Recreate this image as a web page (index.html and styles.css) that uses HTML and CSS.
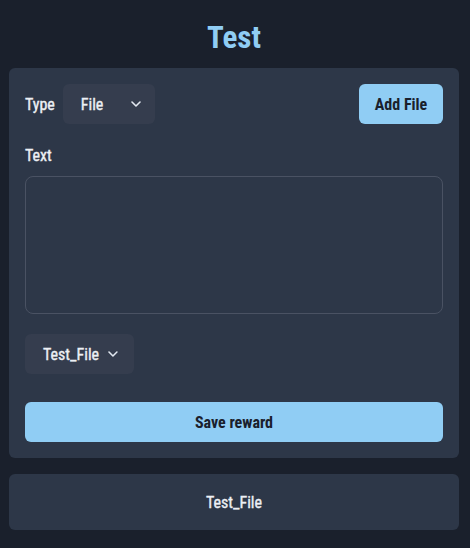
FILE: index.html
```html
<!DOCTYPE html>
<html>
<head>
<meta charset="utf-8">
<link rel="stylesheet" href="styles.css">
</head>
<body>
<main class="page">
  <h1 class="title">Test</h1>
  <section class="card">
    <div class="row-top">
      <div class="type-group">
        <span class="label label-type">Type</span>
        <div class="select select-type">
          <span>File</span>
          <svg class="chev" width="10" height="6" viewBox="0 0 10 6"><path d="M1 1l4 4 4-4" fill="none" stroke="currentColor" stroke-width="1.6" stroke-linecap="round" stroke-linejoin="round"/></svg>
        </div>
      </div>
      <button class="btn btn-add">Add File</button>
    </div>
    <div class="field">
      <span class="label">Text</span>
      <textarea class="textarea"></textarea>
    </div>
    <div class="select select-file">
      <span>Test_File</span>
      <svg class="chev" width="10" height="6" viewBox="0 0 10 6"><path d="M1 1l4 4 4-4" fill="none" stroke="currentColor" stroke-width="1.6" stroke-linecap="round" stroke-linejoin="round"/></svg>
    </div>
    <button class="btn btn-save">Save reward</button>
  </section>
  <section class="card item">Test_File</section>
</main>
</body>
</html>
```
FILE: styles.css
```css
* { box-sizing: border-box; }
html, body { margin: 0; padding: 0; }
body {
  background: #1a202c;
  color: #e8ecf2;
  font-family: Roboto, "Liberation Sans", sans-serif;
  font-stretch: condensed;
  width: 470px;
  height: 548px;
  overflow: hidden;
}
.page {
  width: 468px;
  padding: 0 9px;
  display: flex;
  flex-direction: column;
}
.title {
  margin: 0;
  height: 68px;
  display: flex;
  align-items: center;
  justify-content: center;
  font-size: 31px;
  font-weight: 700;
  color: #90cdf4;
  padding-top: 6px;
}
.card {
  background: #2d3748;
  border-radius: 6px;
  padding: 16px;
}
.row-top {
  display: flex;
  justify-content: space-between;
  align-items: center;
}
.type-group {
  display: flex;
  align-items: center;
  gap: 8px;
}
.medium {
  font-weight: 400;
}
.label {
  font-size: 16px;
  line-height: 20px;
  font-weight: 400;
  -webkit-text-stroke: 0.35px currentColor;
  color: #edf0f5;
}
.label-type { padding-top: 1px; }
.select {
  height: 40px;
  background: #353d4e;
  border-radius: 6px;
  display: flex;
  align-items: center;
  font-size: 16px;
  font-weight: 400;
  -webkit-text-stroke: 0.35px currentColor;
  color: #edf0f5;
}
.select-type {
  width: 92px;
  padding: 0 14px 0 18px;
  justify-content: space-between;
}
.select-file {
  width: 109px;
  padding: 0 16px 0 18px;
  gap: 9px;
  margin-top: 20px;
}
.chev { color: #e2e8f0; }
.btn {
  border: 0;
  border-radius: 6px;
  background: #90cdf4;
  color: #1a202c;
  font-family: inherit;
  font-stretch: condensed;
  font-weight: 700;
  height: 40px;
}
.btn-add {
  width: 84px;
  font-size: 16px;
}
.btn-save {
  width: 100%;
  font-size: 16px;
  margin-top: 28px;
}
.field {
  margin-top: 22px;
  display: flex;
  flex-direction: column;
  gap: 10px;
}
.textarea {
  display: block;
  width: 100%;
  height: 138px;
  background: transparent;
  border: 1px solid #4a5263;
  border-radius: 8px;
  resize: none;
  outline: none;
}
.item {
  margin-top: 16px;
  height: 56px;
  padding: 0;
  display: flex;
  align-items: center;
  justify-content: center;
  font-size: 16px;
  font-weight: 400;
  -webkit-text-stroke: 0.35px currentColor;
  color: #edf0f5;
}
```
